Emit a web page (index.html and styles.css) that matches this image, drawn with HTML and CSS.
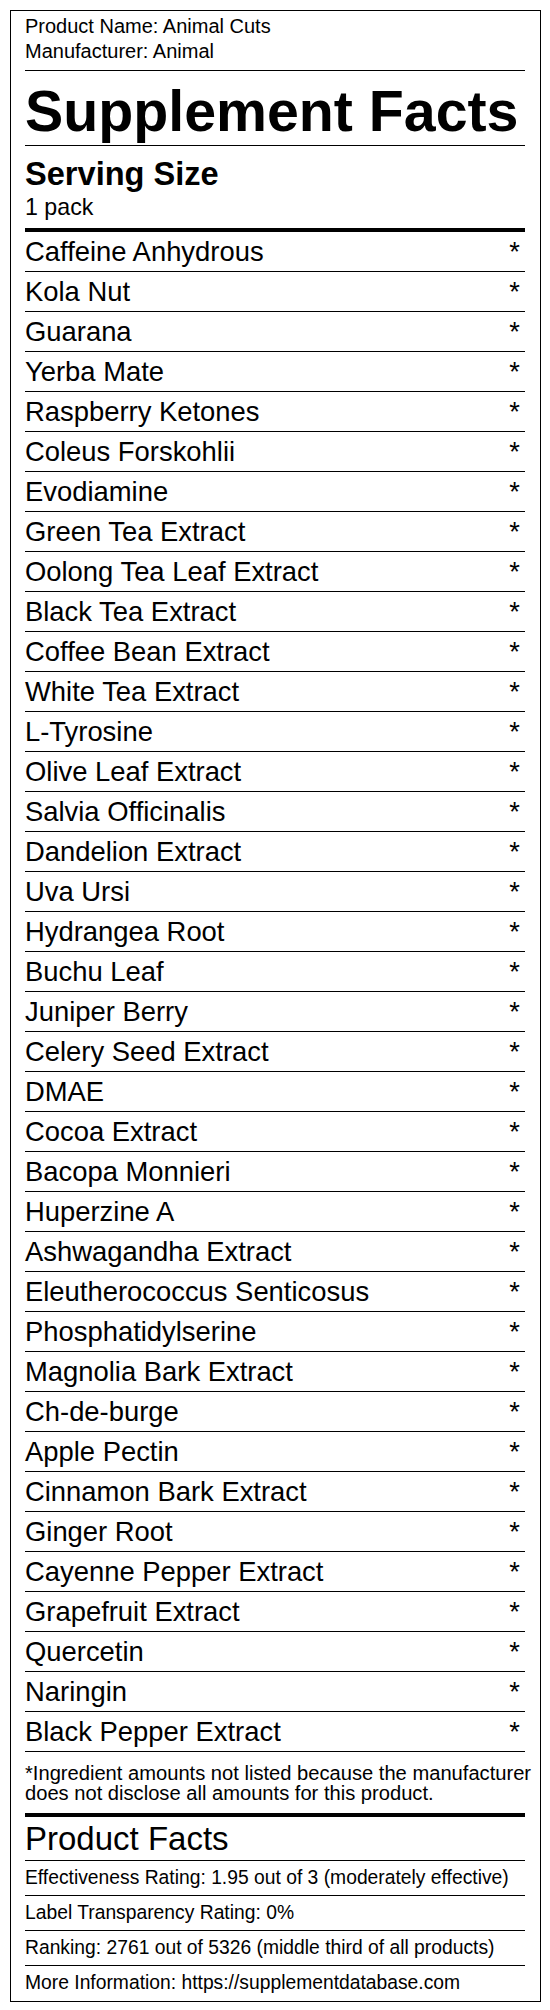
FILE: index.html
```html
<!DOCTYPE html>
<html lang="en">
<head>
<meta charset="utf-8">
<title>Supplement Facts - Animal Cuts</title>
<link rel="stylesheet" href="styles.css">
</head>
<body>
<div class="label">
  <div class="meta">
    <div>Product Name: Animal Cuts</div>
    <div>Manufacturer: Animal</div>
  </div>
  <h1 class="title">Supplement Facts</h1>
  <div class="serving">
    <div class="serving-label">Serving Size</div>
    <div class="serving-value">1 pack</div>
  </div>
  <ul class="ingredients">
    <li><span class="name">Caffeine Anhydrous</span><span class="amt">*</span></li>
    <li><span class="name">Kola Nut</span><span class="amt">*</span></li>
    <li><span class="name">Guarana</span><span class="amt">*</span></li>
    <li><span class="name">Yerba Mate</span><span class="amt">*</span></li>
    <li><span class="name">Raspberry Ketones</span><span class="amt">*</span></li>
    <li><span class="name">Coleus Forskohlii</span><span class="amt">*</span></li>
    <li><span class="name">Evodiamine</span><span class="amt">*</span></li>
    <li><span class="name">Green Tea Extract</span><span class="amt">*</span></li>
    <li><span class="name">Oolong Tea Leaf Extract</span><span class="amt">*</span></li>
    <li><span class="name">Black Tea Extract</span><span class="amt">*</span></li>
    <li><span class="name">Coffee Bean Extract</span><span class="amt">*</span></li>
    <li><span class="name">White Tea Extract</span><span class="amt">*</span></li>
    <li><span class="name">L-Tyrosine</span><span class="amt">*</span></li>
    <li><span class="name">Olive Leaf Extract</span><span class="amt">*</span></li>
    <li><span class="name">Salvia Officinalis</span><span class="amt">*</span></li>
    <li><span class="name">Dandelion Extract</span><span class="amt">*</span></li>
    <li><span class="name">Uva Ursi</span><span class="amt">*</span></li>
    <li><span class="name">Hydrangea Root</span><span class="amt">*</span></li>
    <li><span class="name">Buchu Leaf</span><span class="amt">*</span></li>
    <li><span class="name">Juniper Berry</span><span class="amt">*</span></li>
    <li><span class="name">Celery Seed Extract</span><span class="amt">*</span></li>
    <li><span class="name">DMAE</span><span class="amt">*</span></li>
    <li><span class="name">Cocoa Extract</span><span class="amt">*</span></li>
    <li><span class="name">Bacopa Monnieri</span><span class="amt">*</span></li>
    <li><span class="name">Huperzine A</span><span class="amt">*</span></li>
    <li><span class="name">Ashwagandha Extract</span><span class="amt">*</span></li>
    <li><span class="name">Eleutherococcus Senticosus</span><span class="amt">*</span></li>
    <li><span class="name">Phosphatidylserine</span><span class="amt">*</span></li>
    <li><span class="name">Magnolia Bark Extract</span><span class="amt">*</span></li>
    <li><span class="name">Ch-de-burge</span><span class="amt">*</span></li>
    <li><span class="name">Apple Pectin</span><span class="amt">*</span></li>
    <li><span class="name">Cinnamon Bark Extract</span><span class="amt">*</span></li>
    <li><span class="name">Ginger Root</span><span class="amt">*</span></li>
    <li><span class="name">Cayenne Pepper Extract</span><span class="amt">*</span></li>
    <li><span class="name">Grapefruit Extract</span><span class="amt">*</span></li>
    <li><span class="name">Quercetin</span><span class="amt">*</span></li>
    <li><span class="name">Naringin</span><span class="amt">*</span></li>
    <li><span class="name">Black Pepper Extract</span><span class="amt">*</span></li>
  </ul>
  <p class="footnote">*Ingredient amounts not listed because the manufacturer does not disclose all amounts for this product.</p>
  <div class="facts">
    <h2 class="facts-title">Product Facts</h2>
    <ul class="facts-list">
      <li>Effectiveness Rating: 1.95 out of 3 (moderately effective)</li>
      <li>Label Transparency Rating: 0%</li>
      <li>Ranking: 2761 out of 5326 (middle third of all products)</li>
      <li>More Information: https://supplementdatabase.com</li>
    </ul>
  </div>
</div>
</body>
</html>
```
FILE: styles.css
```css
* {
  box-sizing: border-box;
}

html,
body {
  margin: 0;
  padding: 0;
  background: #fff;
}

body {
  font-family: "Liberation Sans", Arial, Helvetica, sans-serif;
  color: #000;
}

.label {
  margin: 10px 0 0 10px;
  width: 531px;
  border: 1px solid #000;
  padding: 3px 15px 0 14px;
}

.meta {
  font-size: 20px;
  line-height: 25px;
  padding-bottom: 6px;
  border-bottom: 1px solid #000;
}

.title {
  margin: 0;
  font-size: 57.3px;
  font-weight: bold;
  line-height: 57px;
  padding: 12px 0 5px;
  white-space: nowrap;
  border-bottom: 1px solid #000;
}

.serving {
  padding: 9px 0 7px;
}

.serving-label {
  font-size: 32.6px;
  font-weight: bold;
  line-height: 38px;
}

.serving-value {
  font-size: 23.2px;
  line-height: 28px;
}

.ingredients {
  list-style: none;
  margin: 0;
  padding: 0;
  border-top: 4px solid #000;
}

.ingredients li {
  display: flex;
  justify-content: space-between;
  align-items: center;
  height: 40px;
  font-size: 27.4px;
  line-height: 39px;
  border-bottom: 1px solid #000;
  white-space: nowrap;
}

.ingredients .amt {
  padding-right: 5px;
}

.footnote {
  margin: 0 -15px 0 0;
  padding: 11px 0 10px;
  font-size: 20.15px;
  line-height: 20px;
  white-space: normal;
}

.facts {
  border-top: 4px solid #000;
}

.facts-title {
  margin: 0;
  font-size: 33px;
  font-weight: normal;
  line-height: 32px;
  padding: 6px 0 5px;
  border-bottom: 1px solid #000;
}

.facts-list {
  list-style: none;
  margin: 0;
  padding: 0;
}

.facts-list li {
  height: 35px;
  font-size: 19.3px;
  line-height: 34px;
  white-space: nowrap;
  border-bottom: 1px solid #000;
}

.facts-list li:last-child {
  border-bottom: none;
}
```
